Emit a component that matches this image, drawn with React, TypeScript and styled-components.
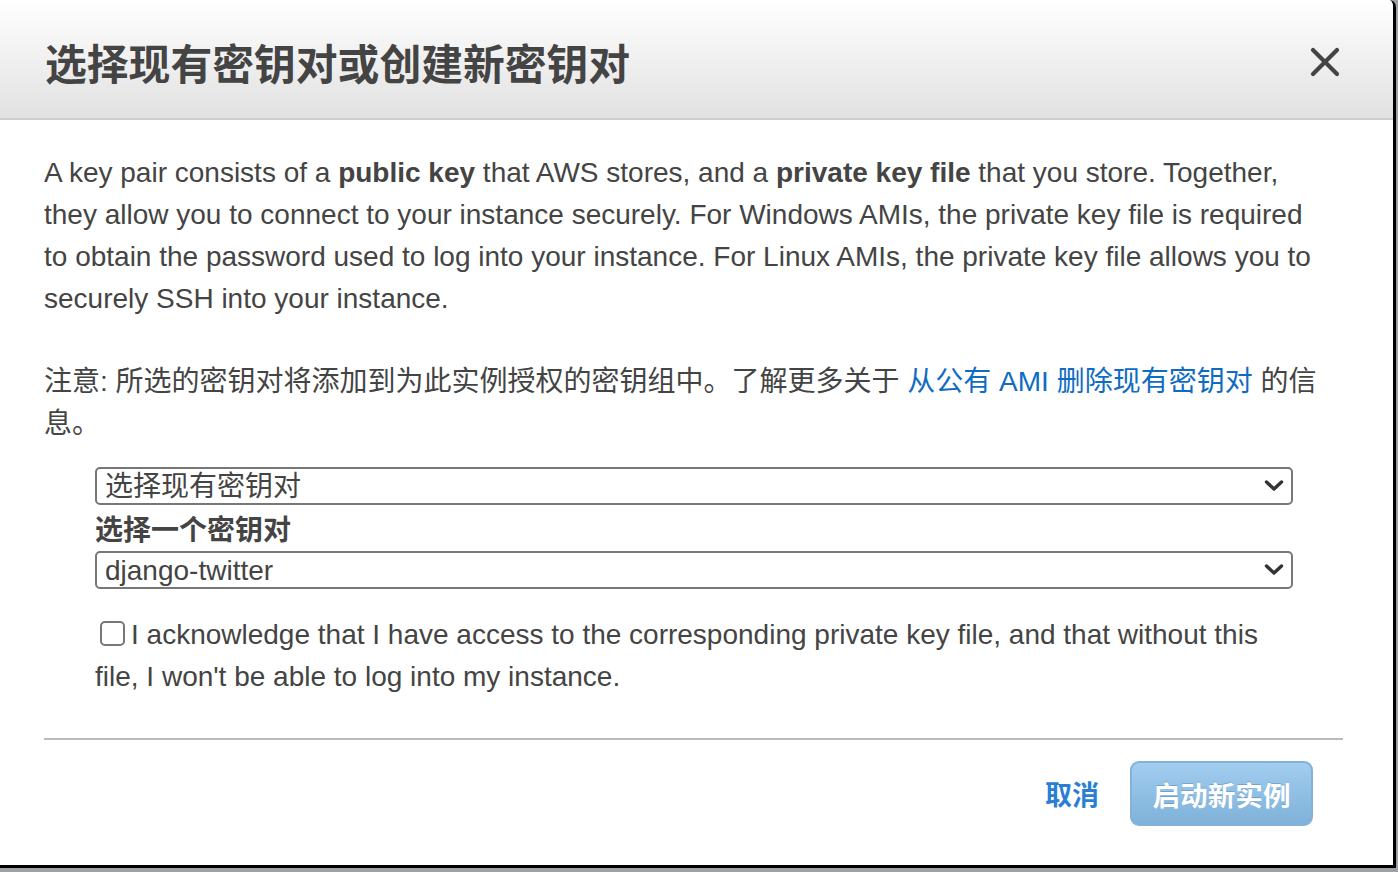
import React from "react";
import styled, { createGlobalStyle } from "styled-components";

const GlobalStyle = createGlobalStyle`
  html, body {
    margin: 0;
    padding: 0;
    background: #9ea1a6;
    overflow: hidden;
  }
  * {
    box-sizing: border-box;
  }
`;

const FONT = `"Liberation Sans", "Noto Sans CJK SC", Arial, sans-serif`;
const CJK = `"Noto Sans CJK SC", "Liberation Sans", sans-serif`;

const Page = styled.div`
  width: 1398px;
  height: 872px;
  display: flex;
  align-items: flex-start;
`;

const Dialog = styled.div`
  width: 1396px;
  height: 868px;
  background: #fff;
  border-right: 3px solid #000;
  border-bottom: 3px solid #000;
  border-top-right-radius: 7px;
  display: flex;
  flex-direction: column;
  overflow: hidden;
  font-family: ${FONT};
  color: #444;
`;

const Header = styled.div`
  height: 120px;
  flex: none;
  display: flex;
  align-items: center;
  justify-content: space-between;
  padding: 6px 53px 0 45px;
  background: linear-gradient(#ffffff, #e1e1e1);
  border-bottom: 2px solid #cdcdcd;
`;

const Title = styled.h2`
  margin: 0;
  font-family: ${CJK};
  font-size: 41.8px;
  font-weight: 700;
  color: #444;
`;

const CloseButton = styled.button`
  border: none;
  background: none;
  padding: 0;
  width: 30px;
  height: 30px;
  display: flex;
  align-items: center;
  justify-content: center;
  cursor: pointer;
`;

const Body = styled.div`
  padding: 32px 50px 0 44px;
  flex: 1;
  display: flex;
  flex-direction: column;
`;

const Para = styled.p<{ $gap?: number }>`
  margin: 0 0 ${(p) => p.$gap ?? 0}px;
  padding-right: 12px;
  font-size: 28px;
  line-height: 42px;
  color: #444;
`;

const Link = styled.a`
  color: #0f6cc2;
  text-decoration: none;
`;

const Form = styled.div`
  padding: 0 50px 0 51px;
  display: flex;
  flex-direction: column;
`;

const SelectWrap = styled.div`
  position: relative;
  height: 38px;
`;

const Select = styled.select`
  appearance: none;
  width: 100%;
  height: 38px;
  border: 2px solid #777;
  border-radius: 5px;
  background: #fff;
  padding: 0 40px 0 8px;
  font-family: ${FONT};
  font-size: 28px;
  color: #444;
  outline: none;
`;

const Chevron = styled.svg`
  position: absolute;
  right: 9px;
  top: 12px;
  pointer-events: none;
`;

const FieldLabel = styled.label`
  display: block;
  font-family: ${CJK};
  font-weight: 700;
  font-size: 28px;
  line-height: 46px;
  color: #444;
`;

const CheckRow = styled.label`
  display: block;
  margin-top: 25px;
  font-size: 28px;
  line-height: 42px;
  color: #444;
`;

const Checkbox = styled.input`
  appearance: none;
  width: 25px;
  height: 25px;
  margin: 0 6px 0 5px;
  border: 2px solid #777;
  border-radius: 5px;
  vertical-align: -2px;
  background: #fff;
`;

const Divider = styled.hr`
  margin: 40px 0 0;
  border: none;
  border-top: 2px solid #bbb;
`;

const Footer = styled.div`
  display: flex;
  justify-content: flex-end;
  align-items: center;
  gap: 31px;
  padding: 21px 30px 0 0;
`;

const CancelButton = styled.button`
  border: none;
  background: none;
  padding: 0;
  font-family: ${CJK};
  font-weight: 700;
  font-size: 27px;
  color: #2a7fd4;
  cursor: pointer;
`;

const PrimaryButton = styled.button`
  width: 183px;
  height: 65px;
  border: 2px solid #84b1d6;
  border-radius: 9px;
  background: linear-gradient(#a1cdef, #7fb1d9);
  color: #fff;
  font-family: ${CJK};
  font-weight: 700;
  font-size: 27.6px;
  text-shadow: 0 -1px 0 rgba(60, 110, 160, 0.35);
  cursor: default;
`;

const ChevronIcon = () => (
  <Chevron width="20" height="14" viewBox="0 0 20 14">
    <path
      d="M2.5 3 L10 10 L17.5 3"
      fill="none"
      stroke="#333"
      strokeWidth="3.4"
      strokeLinecap="round"
      strokeLinejoin="round"
    />
  </Chevron>
);

export default function App() {
  const [keyPair, setKeyPair] = React.useState("django-twitter");
  const [ack, setAck] = React.useState(false);

  return (
    <Page>
      <GlobalStyle />
      <Dialog>
        <Header>
          <Title>选择现有密钥对或创建新密钥对</Title>
          <CloseButton aria-label="close">
            <svg width="30" height="30" viewBox="0 0 30 30">
              <path
                d="M3 3 L27 27 M27 3 L3 27"
                stroke="#444"
                strokeWidth="4.2"
                strokeLinecap="round"
              />
            </svg>
          </CloseButton>
        </Header>
        <Body>
          <Para $gap={41}>
            A key pair consists of a <b>public key</b> that AWS stores, and a{" "}
            <b>private key file</b> that you store. Together, they allow you to
            connect to your instance securely. For Windows AMIs, the private key
            file is required to obtain the password used to log into your
            instance. For Linux AMIs, the private key file allows you to
            securely SSH into your instance.
          </Para>
          <Para $gap={22}>
            注意: 所选的密钥对将添加到为此实例授权的密钥组中。了解更多关于{" "}
            <Link href="#">从公有 AMI 删除现有密钥对</Link> 的信息。
          </Para>
          <Form>
            <SelectWrap>
              <Select defaultValue="existing">
                <option value="existing">选择现有密钥对</option>
                <option value="new">创建新密钥对</option>
              </Select>
              <ChevronIcon />
            </SelectWrap>
            <FieldLabel>选择一个密钥对</FieldLabel>
            <SelectWrap>
              <Select value={keyPair} onChange={(e) => setKeyPair(e.target.value)}>
                <option value="django-twitter">django-twitter</option>
              </Select>
              <ChevronIcon />
            </SelectWrap>
            <CheckRow>
              <Checkbox
                type="checkbox"
                checked={ack}
                onChange={(e) => setAck(e.target.checked)}
              />
              I acknowledge that I have access to the corresponding private key
              file, and that without this file, I won't be able to log into my
              instance.
            </CheckRow>
          </Form>
          <Divider />
          <Footer>
            <CancelButton>取消</CancelButton>
            <PrimaryButton disabled>启动新实例</PrimaryButton>
          </Footer>
        </Body>
      </Dialog>
    </Page>
  );
}
